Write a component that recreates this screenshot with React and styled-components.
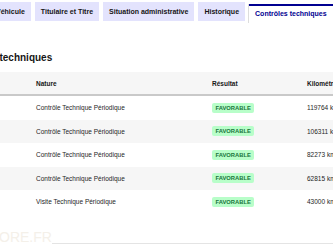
import React from 'react'
import styled, { createGlobalStyle } from 'styled-components'

const GlobalStyle = createGlobalStyle`
  html, body {
    margin: 0;
    padding: 0;
    background: #fff;
    overflow: hidden;
  }
  body {
    width: 333px;
    height: 250px;
    font-family: "Liberation Sans", Arial, sans-serif;
    color: #161616;
  }
`;

const tabs = [
  { label: 'Véhicule' },
  { label: 'Titulaire et Titre' },
  { label: 'Situation administrative' },
  { label: 'Historique' },
  { label: 'Contrôles techniques', active: true },
];

const controles = [
  { date: '12/03/2023', nature: 'Contrôle Technique Périodique', resultat: 'FAVORABLE', km: '119764 km' },
  { date: '08/03/2021', nature: 'Contrôle Technique Périodique', resultat: 'FAVORABLE', km: '106311 km' },
  { date: '02/03/2019', nature: 'Contrôle Technique Périodique', resultat: 'FAVORABLE', km: '82273 km' },
  { date: '27/02/2017', nature: 'Contrôle Technique Périodique', resultat: 'FAVORABLE', km: '62815 km' },
  { date: '15/02/2015', nature: 'Visite Technique Périodique', resultat: 'FAVORABLE', km: '43000 km' },
];

function App() {
  return (
    <>
      <GlobalStyle />
      <Page>
        <TabList>
          {tabs.map((t) => (
            <Tab key={t.label} $active={t.active}>{t.label}</Tab>
          ))}
        </TabList>
        <Title>Contrôles techniques</Title>
        <Table>
          <HeadRow>
            <HeadCell>Date</HeadCell>
            <HeadCell>Nature</HeadCell>
            <HeadCell>Résultat</HeadCell>
            <HeadCell>Kilométrage</HeadCell>
          </HeadRow>
          {controles.map((c, i) => (
            <Row key={i} $odd={i % 2 === 1}>
              <Cell>{c.date}</Cell>
              <Cell>{c.nature}</Cell>
              <Cell>
                <Badge>{c.resultat}</Badge>
              </Cell>
              <Cell>{c.km}</Cell>
            </Row>
          ))}
        </Table>
        <Footer>
          <Watermark>ORE.FR</Watermark>
          <Rule />
        </Footer>
      </Page>
    </>
  )
}

export default App;

const Page = styled.div`
  margin-left: -50px;
  width: 600px;
`;

const TabList = styled.div`
  display: flex;
  align-items: flex-start;
  gap: 4px;
  margin-top: 2px;
  padding-left: 40px;
  height: 19px;
`;

const Tab = styled.div`
  flex: none;
  height: ${(p) => (p.$active ? '17px' : '19px')};
  margin-top: ${(p) => (p.$active ? '2px' : '0')};
  padding: 0 6px;
  font-size: 7px;
  font-weight: 700;
  line-height: ${(p) => (p.$active ? '16px' : '19px')};
  white-space: nowrap;
  background: ${(p) => (p.$active ? '#fff' : '#e3e3fd')};
  color: ${(p) => (p.$active ? '#000091' : '#161616')};
  border-top: ${(p) => (p.$active ? '2px solid #000091' : 'none')};
  box-shadow: ${(p) => (p.$active ? '-1px 0 0 #dddddd' : 'none')};
`;

const Title = styled.h2`
  margin: 31px 0 0;
  font-size: 10px;
  font-weight: 700;
  line-height: 12px;
  color: #161616;
`;

const Table = styled.div`
  margin-top: 8px;
  width: 520px;
`;

const HeadRow = styled.div`
  display: grid;
  grid-template-columns: 86px 176px 95px 1fr;
  height: 22px;
  align-items: center;
  background: #f6f6f6;
  border-bottom: 2px solid #c9c9c9;
`;

const HeadCell = styled.div`
  font-size: 6.5px;
  font-weight: 700;
  color: #161616;
  white-space: nowrap;
`;

const Row = styled.div`
  display: grid;
  grid-template-columns: 86px 176px 95px 1fr;
  height: 23.5px;
  align-items: center;
  background: ${(p) => (p.$odd ? '#f6f6f6' : '#ffffff')};
`;

const Cell = styled.div`
  font-size: 6.5px;
  color: #1e1e1e;
  white-space: nowrap;
`;

const Badge = styled.span`
  display: inline-block;
  padding: 0 3.5px;
  height: 10px;
  line-height: 10px;
  border-radius: 2px;
  background: #b8fec9;
  color: #18753c;
  font-size: 5.8px;
  font-weight: 700;
`;

const Footer = styled.div`
  display: flex;
  align-items: flex-end;
  margin-top: 16px;
  padding-left: 49px;
`;

const Watermark = styled.div`
  font-size: 14px;
  line-height: 14px;
  color: #f4f0e9;
  white-space: nowrap;
`;

const Rule = styled.div`
  flex: 1;
  height: 1px;
  background: #e4e4e4;
`;
